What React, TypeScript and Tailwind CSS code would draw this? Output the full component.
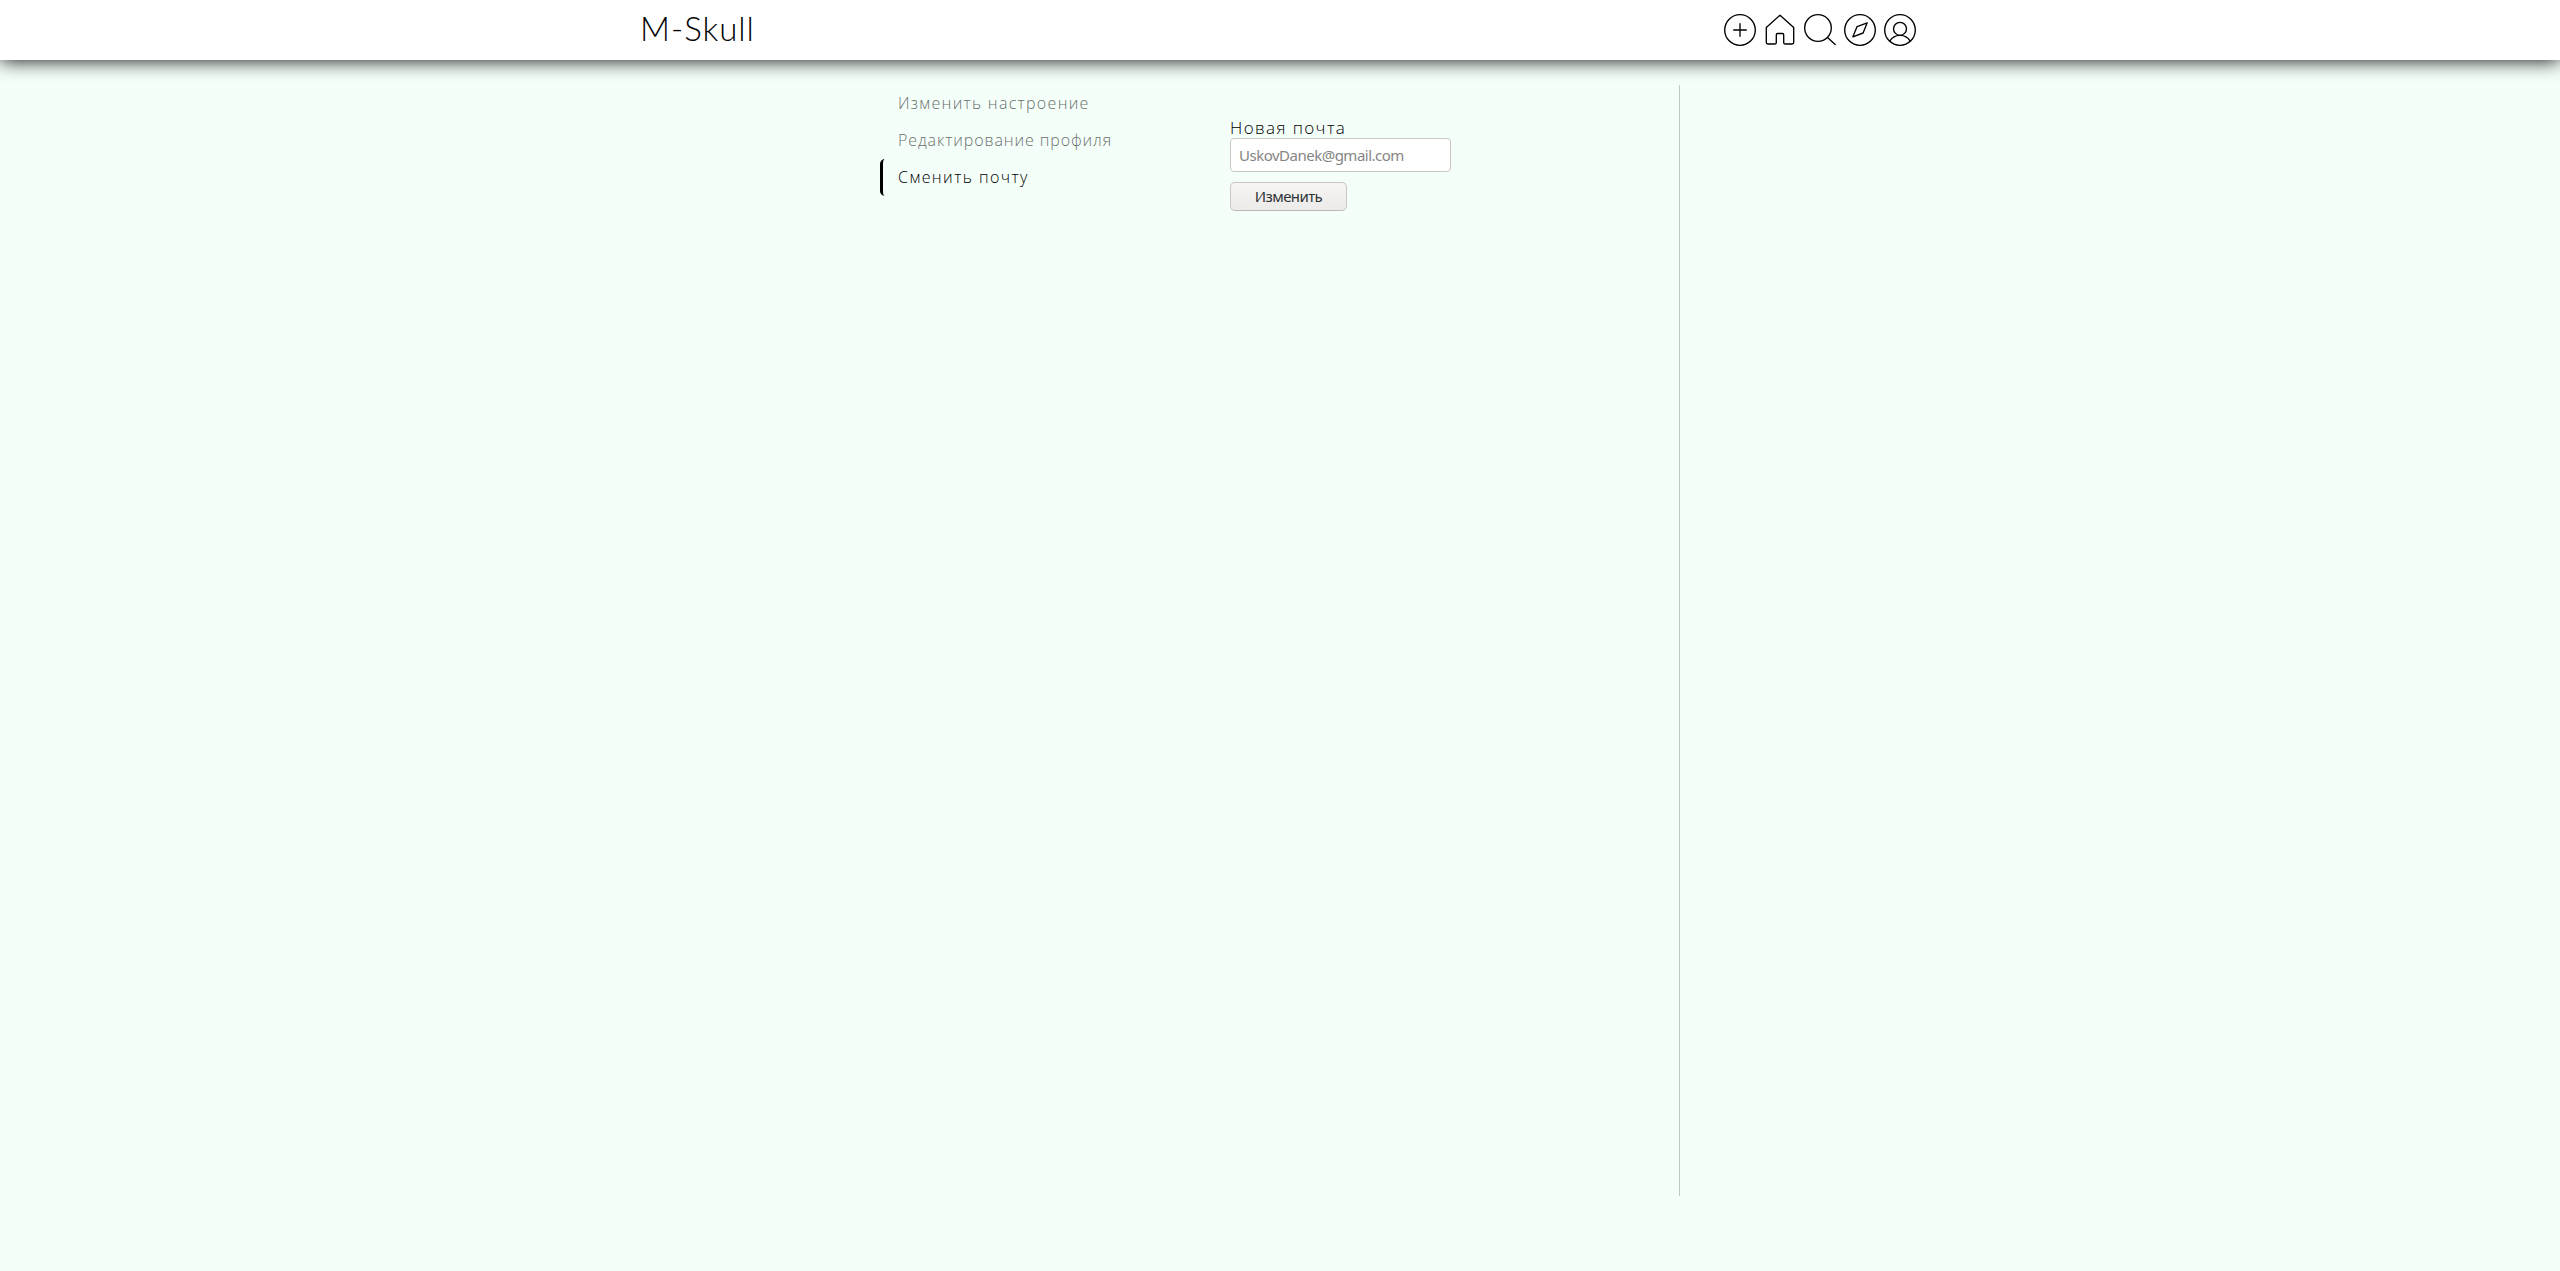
import type { ReactNode } from "react";

function Icon({ children }: { children: ReactNode }) {
  return (
    <a href="#" className="block size-8">
      <svg viewBox="0 0 32 32" className="size-8" fill="none" stroke="#000" strokeWidth="1.35" strokeLinecap="round" strokeLinejoin="round">
        {children}
      </svg>
    </a>
  );
}

function Header() {
  return (
    <header className="relative h-[60px] w-full bg-white shadow-[0_0_20px_#000]">
      <div className="mx-auto flex h-full w-[1280px] items-center justify-between pr-1">
        <a href="#" className="mb-[4px] font-['Lato'] text-[33px] leading-[56px] font-light tracking-[1px] whitespace-nowrap text-black">M-Skull</a>
        <nav className="flex gap-2">
          <Icon>
            <circle cx="16" cy="16" r="15.3" />
            <path d="M16 9.7v12.6M9.7 16h12.6" />
          </Icon>
          <Icon>
            <path d="M16 1.2 2.3 13.6v14.7q0 1.7 1.7 1.7h6.700q1.600 0 1.600-1.600v-7.700q0-1.200 1.200-1.200h5q1.200 0 1.200 1.200v7.700q0 1.600 1.600 1.600h6.700q1.700 0 1.700-1.700V13.600Z" />
          </Icon>
          <Icon>
            <circle cx="14" cy="14" r="13.3" />
            <path d="m23.500 23.500 7.700 7" />
          </Icon>
          <Icon>
            <circle cx="16" cy="16" r="15.3" />
            <path d="m23.200 8.800-10.100 3.800-4.200 10.200 10.200-3.800Z" />
          </Icon>
          <Icon>
            <circle cx="16" cy="16" r="15.3" />
            <circle cx="16" cy="14.800" r="6.500" />
            <path d="M5.800 27.200C8 23.200 11.700 21.300 16 21.300s8 1.900 10.200 5.900" />
          </Icon>
        </nav>
      </div>
    </header>
  );
}

export default function App() {
  return (
    <div className="min-h-[1271px] bg-[#f5fffa] font-['Open_Sans','Noto_Sans',sans-serif] text-black">
      <Header />
      <main className="mx-auto mt-[25px] flex h-[1111px] w-[800px] border-r border-[#c0c8c4]">
        <ul className="w-[350px] text-[16px] font-light whitespace-nowrap">
          <li className="h-[37px] pl-[18px] leading-[36px] tracking-[1.3px] text-[#6a6f6c]"><a href="#">Изменить настроение</a></li>
          <li className="h-[37px] pl-[18px] leading-[36px] tracking-[0.9px] text-[#6a6f6c]"><a href="#">Редактирование профиля</a></li>
          <li className="h-[37px] rounded-[5px] border-l-[3px] border-black pl-[15px] leading-[36px] tracking-[1.45px]"><a href="#">Сменить почту</a></li>
        </ul>
        <form className="pt-[33px]">
          <label className="block h-5 text-[17px] leading-5 font-light tracking-[1.4px] whitespace-nowrap">Новая почта</label>
          <input
            placeholder="UskovDanek@gmail.com"
            className="block h-[34px] w-[221px] rounded-[4px] border border-[#cdc7c2] bg-white px-2 font-['Noto_Sans'] text-[15px] tracking-[-0.5px] placeholder:text-[#858585]"
          />
          <button type="button" className="mt-[10px] block h-[29px] w-[117px] rounded-[5px] border border-[#cdc7c2] border-b-[#bfb8b1] bg-linear-to-b from-[#f6f5f4] to-[#edebe9] font-['Noto_Sans'] text-[15px] leading-[27px] tracking-[-0.6px] text-[#2e3436]">
            Изменить
          </button>
        </form>
      </main>
    </div>
  );
}
